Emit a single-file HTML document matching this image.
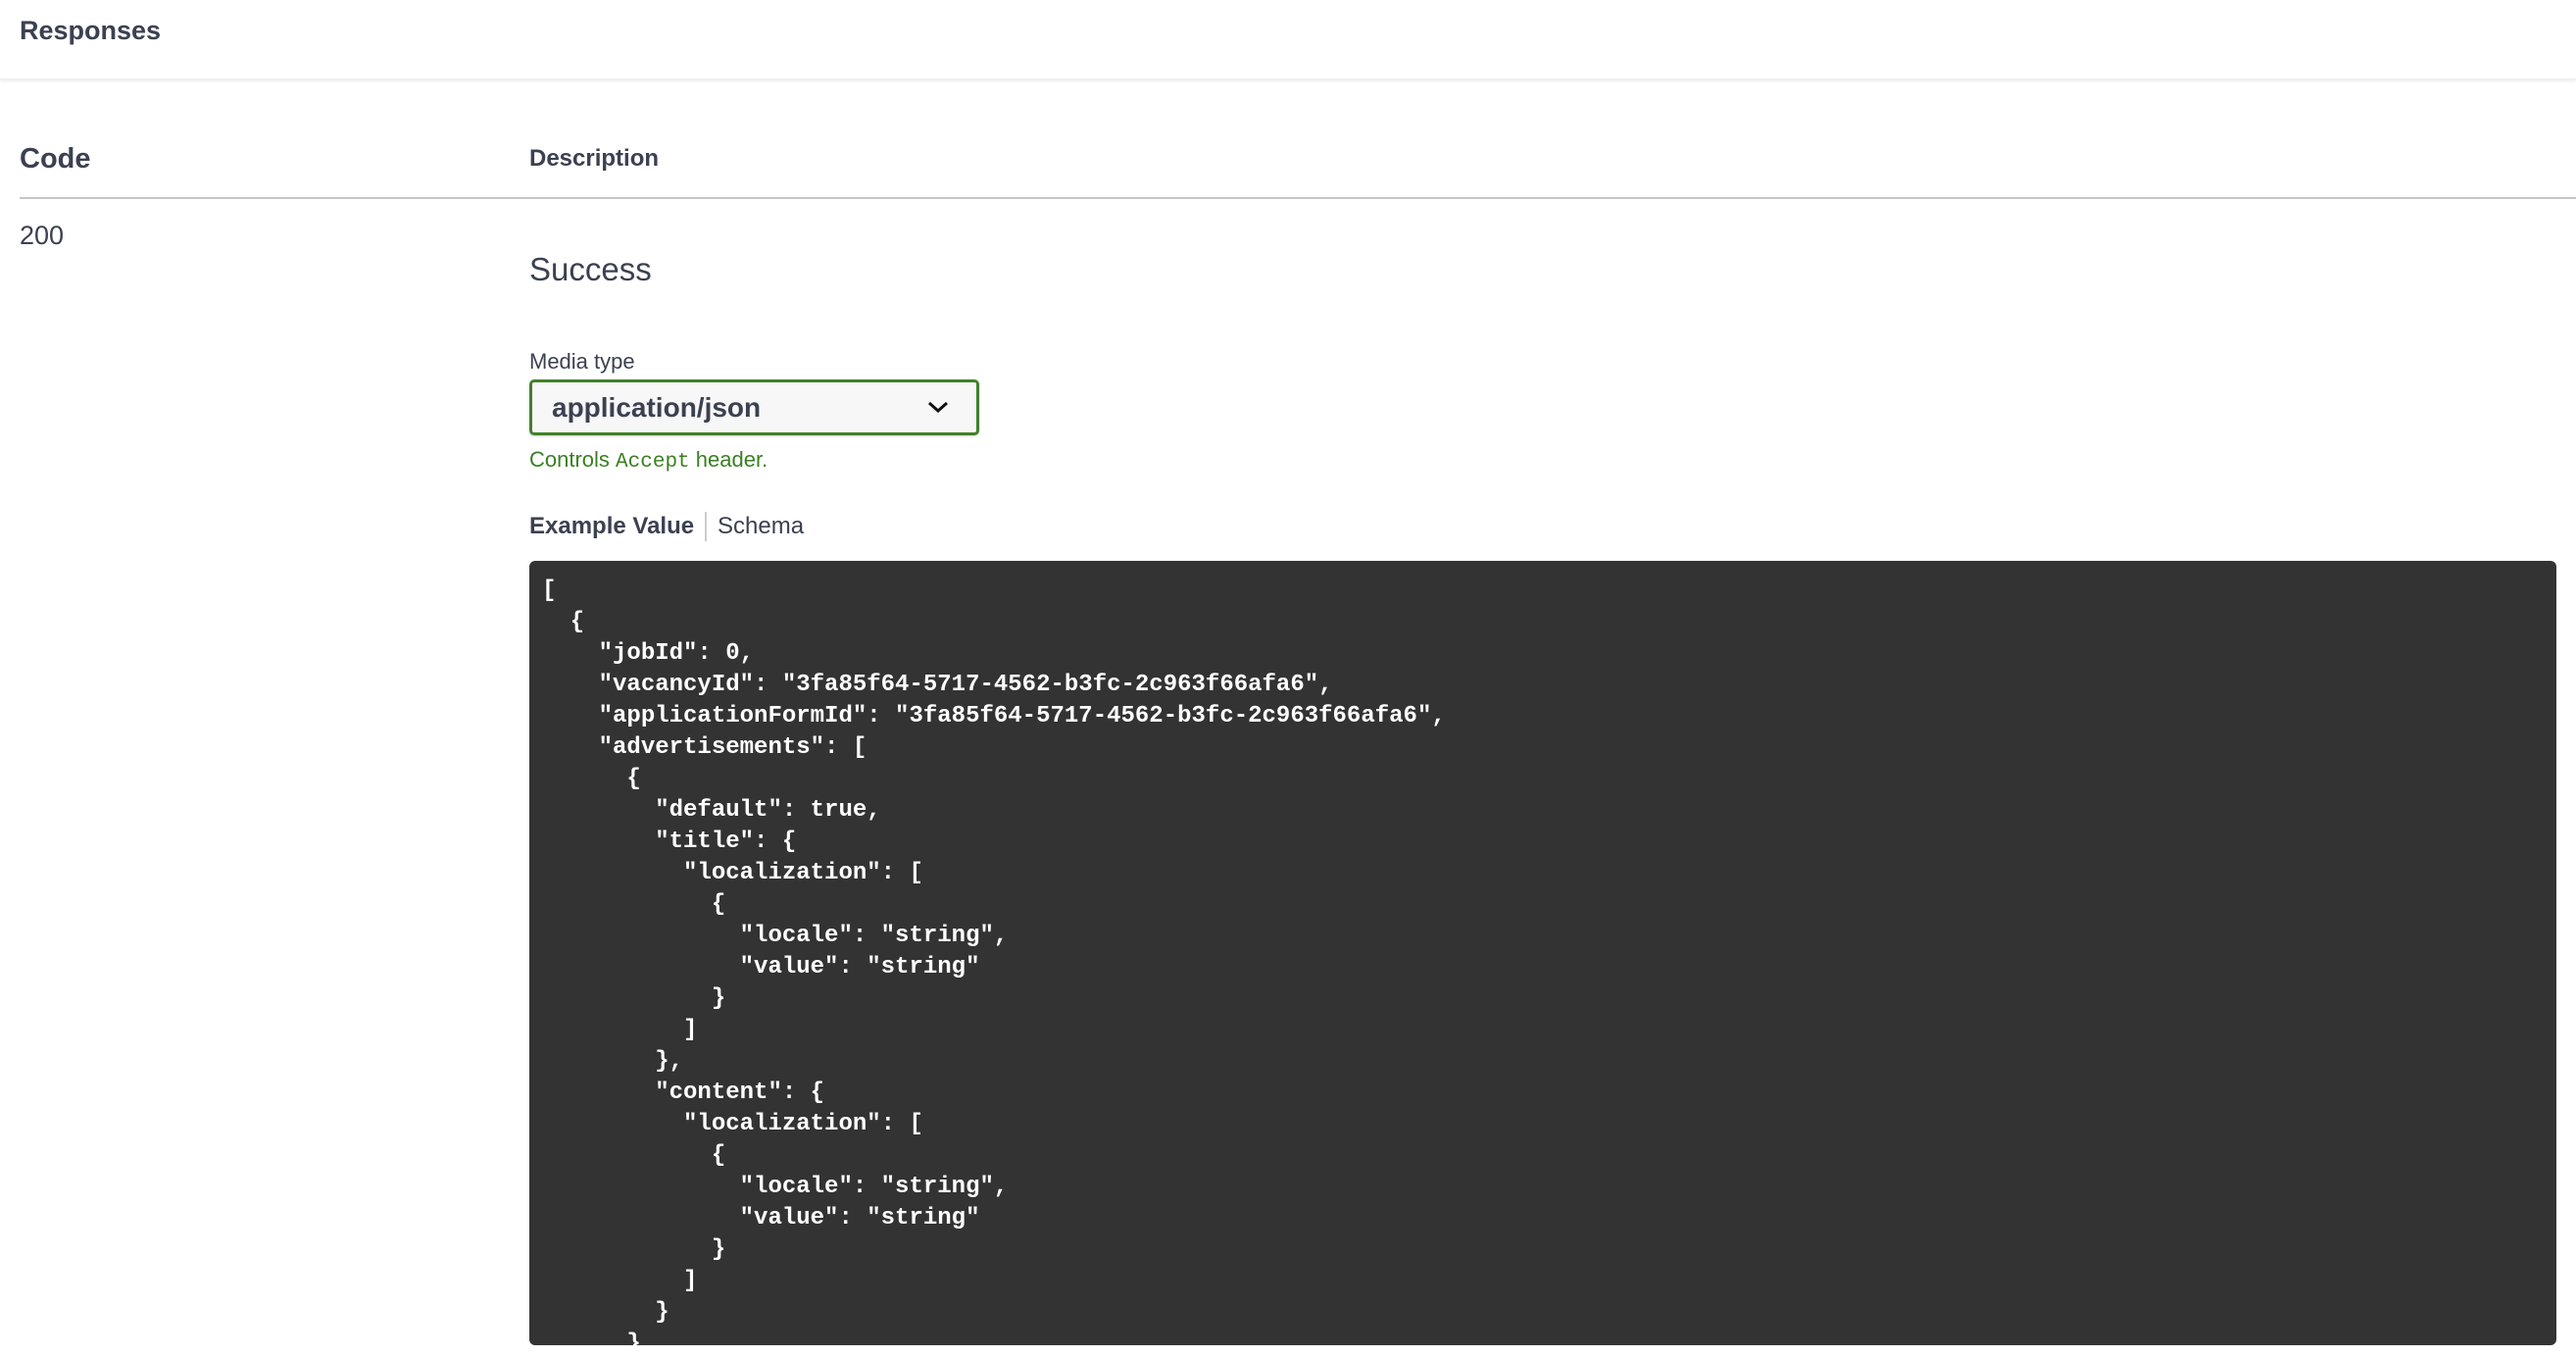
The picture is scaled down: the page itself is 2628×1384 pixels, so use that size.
<!DOCTYPE html>
<html><head><meta charset="utf-8"><style>
html,body{margin:0;padding:0;width:2628px;height:1384px;overflow:hidden;background:#fff;font-family:"Liberation Sans",Arial,sans-serif;color:#3b4151}
.abs{position:absolute;white-space:nowrap}
.hdr{position:absolute;left:0;top:0;width:2628px;height:80px;background:#fff;box-shadow:0 2px 3px rgba(0,0,0,.08);border-bottom:1px solid #eee}
pre{position:absolute;left:540px;top:572px;width:2068px;height:800px;margin:0;box-sizing:border-box;padding:15px 13px;background:#333;color:#fff;border-radius:6px;font-family:"Liberation Mono","DejaVu Sans Mono",monospace;font-size:24px;line-height:32px;font-weight:bold;overflow:hidden}
</style></head><body>
<div class="hdr"></div>
<div class="abs" style="left:20px;top:16px;font-size:27px;font-weight:bold;">Responses</div>
<div class="abs" style="left:20px;top:146px;font-size:29px;font-weight:bold;">Code</div>
<div class="abs" style="left:540px;top:148px;font-size:24px;font-weight:bold;">Description</div>
<div class="abs" style="left:20px;top:201px;width:2608px;height:2px;background:#c4c5c9"></div>
<div class="abs" style="left:20px;top:225px;font-size:27px;">200</div>
<div class="abs" style="left:540px;top:256px;font-size:33px;">Success</div>
<div class="abs" style="left:540px;top:356px;font-size:22px;">Media type</div>
<div class="abs" style="left:540px;top:387px;width:459px;height:57px;box-sizing:border-box;border:3px solid #41812a;border-radius:5px;background:#f7f7f7;box-shadow:0 1px 2px rgba(0,0,0,.2)"></div>
<div class="abs" style="left:563px;top:400px;font-size:28px;font-weight:bold;">application/json</div>
<svg class="abs" style="left:945px;top:406px" width="24" height="18" viewBox="0 0 24 18"><path d="M3 5 L12 13 L21 5" fill="none" stroke="#111" stroke-width="3"/></svg>
<div class="abs" style="left:540px;top:456px;font-size:22px;color:#3b7f23;">Controls <span style="font-family:'Liberation Mono',monospace;font-size:21px">Accept</span> header.</div>
<div class="abs" style="left:540px;top:523px;font-size:24px;font-weight:bold;">Example Value</div>
<div class="abs" style="left:719px;top:522px;width:2px;height:30px;background:#ccc"></div>
<div class="abs" style="left:732px;top:523px;font-size:24px;">Schema</div>
<pre>[
  {
    "jobId": 0,
    "vacancyId": "3fa85f64-5717-4562-b3fc-2c963f66afa6",
    "applicationFormId": "3fa85f64-5717-4562-b3fc-2c963f66afa6",
    "advertisements": [
      {
        "default": true,
        "title": {
          "localization": [
            {
              "locale": "string",
              "value": "string"
            }
          ]
        },
        "content": {
          "localization": [
            {
              "locale": "string",
              "value": "string"
            }
          ]
        }
      }
    ]
  }
]</pre>
</body></html>
